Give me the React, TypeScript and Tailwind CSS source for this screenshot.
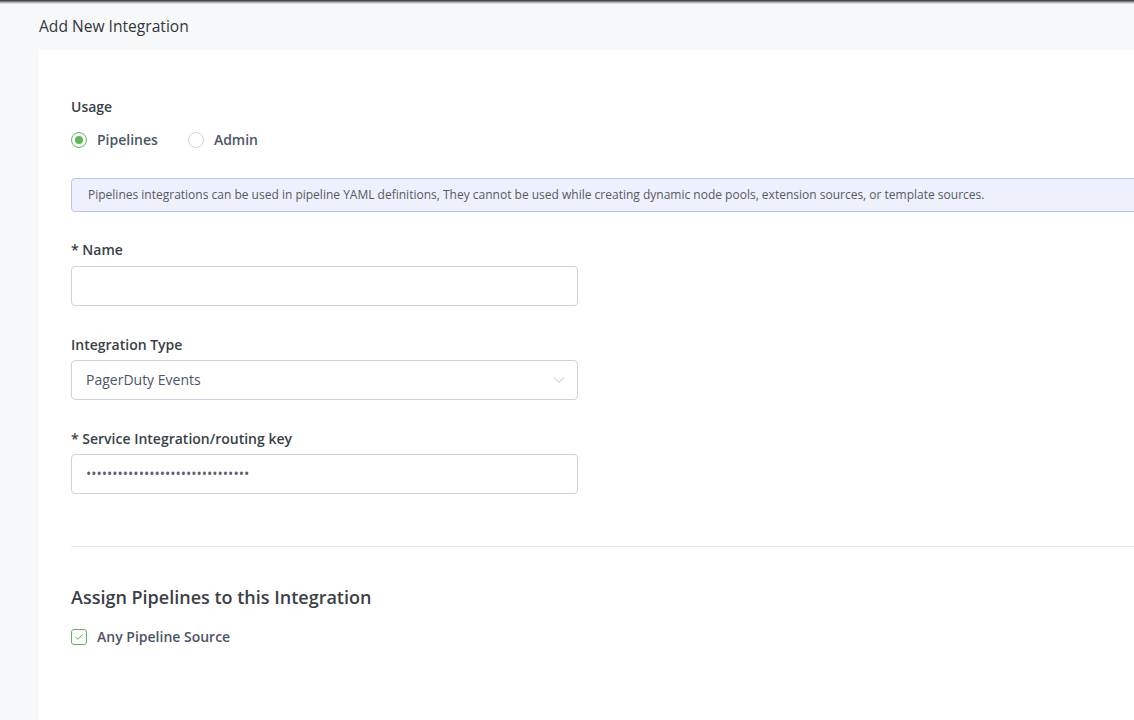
import { useState } from "react";

const Label = ({ children, className = "" }: { children: React.ReactNode; className?: string }) => (
  <div className={`h-5 text-sm leading-5 font-semibold text-[#3a3f47] ${className}`}>{children}</div>
);

const App = () => {
  const [usage, setUsage] = useState<"pipelines" | "admin">("pipelines");
  const [anySource, setAnySource] = useState(true);

  return (
    <div className="relative w-full min-h-[720px] overflow-hidden bg-[#f7f8fa] font-['Open_Sans',sans-serif]">
      <div className="absolute top-0 left-0 right-0 h-[4px] bg-gradient-to-b from-[#2a2d33] via-[#9a9ca1] to-transparent" />
      <div className="pl-[39px] pt-[14px]">
        <h1 className="h-6 text-[15.6px] leading-6 text-[#33363b]">Add New Integration</h1>
        <div className="mt-[12px] w-[1140px] min-h-[670px] bg-white pl-8 pt-[47px] pb-20">
          <Label>Usage</Label>
          <div className="mt-[13px] flex items-center h-5 gap-[30px]">
            {(["pipelines", "admin"] as const).map((k) => (
              <button key={k} onClick={() => setUsage(k)} className="flex items-center gap-2.5">
                <span
                  className={`flex h-4 w-4 items-center justify-center rounded-full border ${
                    usage === k ? "border-[#5cb85c]" : "border-[#cfd4de]"
                  }`}
                >
                  {usage === k && <span className="h-2 w-2 rounded-full bg-[#5cb85c]" />}
                </span>
                <span className="text-sm font-semibold text-[#4d5566]">{k === "pipelines" ? "Pipelines" : "Admin"}</span>
              </button>
            ))}
          </div>
          <div className="mt-[28px] flex h-[34px] items-center rounded border border-[#b9c3ef] bg-[#eef0fb] pl-4 text-xs text-[#555a63]">
            Pipelines integrations can be used in pipeline YAML definitions, They cannot be used while creating dynamic node pools, extension sources, or template sources.
          </div>

          <Label className="mt-[28px]">* Name</Label>
          <input className="mt-1.5 block h-10 w-[507px] rounded border border-[#cdd3df] bg-white px-[14px] text-sm outline-none" />

          <Label className="mt-[29px]">Integration Type</Label>
          <div className="mt-[5px] flex h-10 w-[507px] items-center justify-between rounded border border-[#cdd3df] bg-white pl-[14px] pr-3 text-sm text-[#4d5566]">
            <span>PagerDuty Events</span>
            <svg width="12" height="8" viewBox="0 0 12 8" fill="none">
              <path d="M1 1.5 L6 6.5 L11 1.5" stroke="#b5bac4" strokeWidth="1" />
            </svg>
          </div>

          <Label className="mt-[29px]">* Service Integration/routing key</Label>
          <div className="mt-[5px] flex h-10 w-[507px] items-center rounded border border-[#cdd3df] bg-white px-[14px] text-sm text-[#5a6070]">
            {"•".repeat(31)}
          </div>

          <div className="mt-[52px] h-px bg-[#e8eaee]" />

          <h2 className="mt-[37px] h-[26px] text-lg leading-[26px] font-semibold text-[#3a3f47]">Assign Pipelines to this Integration</h2>
          <button onClick={() => setAnySource(!anySource)} className="mt-[17px] flex h-5 items-center gap-2.5">
            <span className="flex h-4 w-4 items-center justify-center rounded-[3px] border border-[#5cb85c]">
              {anySource && (
                <svg width="10" height="8" viewBox="0 0 10 8" fill="none">
                  <path d="M1.5 4 L4 6.3 L8.5 1.5" stroke="#5cb85c" strokeWidth="1" />
                </svg>
              )}
            </span>
            <span className="text-sm font-semibold text-[#4d5566]">Any Pipeline Source</span>
          </button>
        </div>
      </div>
    </div>
  );
};

export default App;
